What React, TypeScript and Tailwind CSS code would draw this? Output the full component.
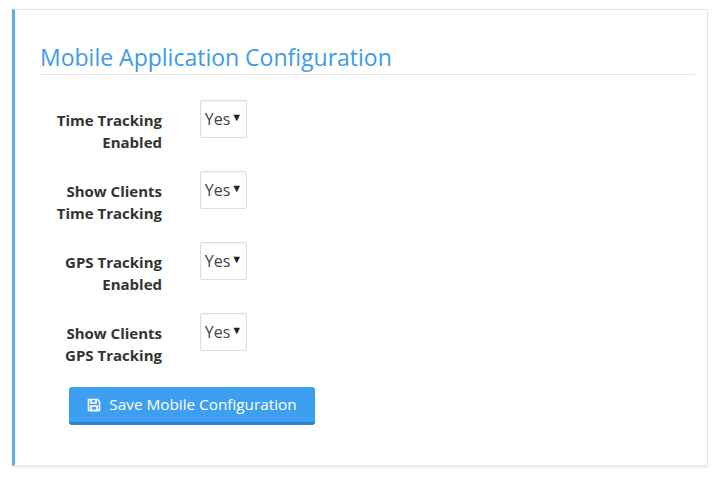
import React from "react";

const rows = [
  ["Time Tracking", "Enabled"],
  ["Show Clients", "Time Tracking"],
  ["GPS Tracking", "Enabled"],
  ["Show Clients", "GPS Tracking"],
];

export default function App() {
  return (
    <div className="w-[720px] h-[480px] bg-white pt-[9px] pl-[12px]" style={{ fontFamily: '"Open Sans", sans-serif' }}>
      <div className="w-[696px] h-[457px] border border-[#e3e3e3] border-l-[3px] border-l-[#5aaeea] shadow-[0_2px_2px_rgba(0,0,0,0.06)] pl-[25px] pr-[12px] pt-[32px]">
        <h2 className="text-[23px] leading-[30px] text-[#3d9be9] border-b border-[#e5e5e5] pb-[2px]">Mobile Application Configuration</h2>
        <div className="mt-[25px] flex flex-col gap-[18px]">
          {rows.map((r, i) => (
            <div key={i} className="flex items-start">
              <div className="w-[122px] text-right text-[15px] leading-[22px] font-bold text-[#333] pt-[9px]">
                <div>{r[0]}</div>
                <div>{r[1]}</div>
              </div>
              <div className="ml-[38px] w-[47px] h-[38px] border border-[#d6dee6] rounded-[2px] flex items-center justify-center text-[16px] text-[#444] shadow-[inset_0_1px_2px_rgba(0,0,0,0.05)]">
                <span>Yes</span><span className="text-[11px] text-[#222] ml-[1px] -mt-[3px]">▼</span>
              </div>
            </div>
          ))}
        </div>
        <button className="mt-[21px] ml-[29px] w-[246px] h-[38px] bg-[#3d9ff0] border-b-[3px] border-[#2f7fc4] rounded-[3px] text-white text-[15.3px] flex items-center justify-center gap-[8px]">
          <svg width="14" height="14" viewBox="0 0 14 14" fill="none" stroke="white" strokeWidth="1.6">
            <path d="M1.5 1.5h9l2 2v9h-11z" />
            <path d="M4 1.5v3.5h5V1.5" />
            <rect x="4" y="8" width="6" height="4.5" />
          </svg>
          Save Mobile Configuration
        </button>
      </div>
    </div>
  );
}
